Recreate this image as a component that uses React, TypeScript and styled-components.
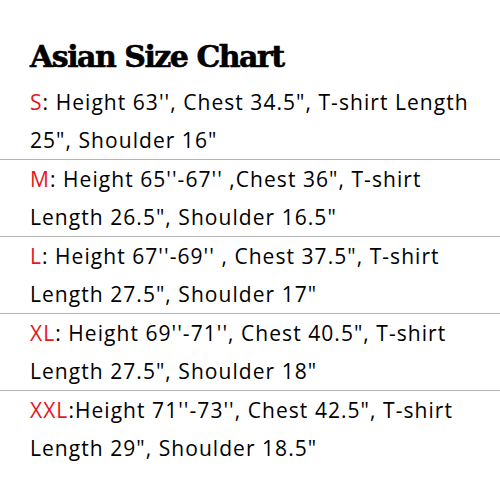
import React from "react";
import styled, { createGlobalStyle } from "styled-components";

const Global = createGlobalStyle`
  html, body { margin: 0; padding: 0; background: #fff; }
  #root { width: 500px; height: 496px; overflow: hidden; }
`;

const Page = styled.div`
  width: 500px;
  height: 496px;
  background: #fff;
  padding-top: 39px;
  box-sizing: border-box;
`;

const Title = styled.h1`
  margin: 0 0 8px 0;
  padding-left: 30px;
  font-family: "DejaVu Serif", serif;
  font-weight: 900;
  font-size: 30px;
  line-height: 36px;
  color: #000;
  letter-spacing: -1.5px;
  -webkit-text-stroke: 0.6px #000;
`;

const List = styled.div`
  display: flex;
  flex-direction: column;
`;

const Row = styled.div<{ $last?: boolean }>`
  padding-left: 30px;
  border-bottom: ${(p) => (p.$last ? "none" : "1px solid #b4b4b4")};
`;

const Line = styled.div`
  font-family: "Open Sans", sans-serif;
  font-size: 21px;
  line-height: 38px;
  letter-spacing: 1.05px;
  color: #000;
  white-space: nowrap;
`;

const Size = styled.span`
  color: #e8141b;
`;

const rows = [
  { size: "S", a: ": Height 63'', Chest 34.5\", T-shirt Length", b: "25\", Shoulder 16\"" },
  { size: "M", a: ": Height 65''-67'' ,Chest 36\", T-shirt", b: "Length 26.5\", Shoulder 16.5\"" },
  { size: "L", a: ": Height 67''-69'' , Chest 37.5\", T-shirt", b: "Length 27.5\", Shoulder 17\"" },
  { size: "XL", a: ": Height 69''-71'', Chest 40.5\", T-shirt", b: "Length 27.5\", Shoulder 18\"" },
  { size: "XXL", a: ":Height 71''-73'', Chest 42.5\", T-shirt", b: "Length 29\", Shoulder 18.5\"" },
];

export default function App() {
  return (
    <>
      <Global />
      <Page>
        <Title>Asian Size Chart</Title>
        <List>
          {rows.map((r, i) => (
            <Row key={r.size} $last={i === rows.length - 1}>
              <Line>
                <Size>{r.size}</Size>
                {r.a}
              </Line>
              <Line>{r.b}</Line>
            </Row>
          ))}
        </List>
      </Page>
    </>
  );
}
